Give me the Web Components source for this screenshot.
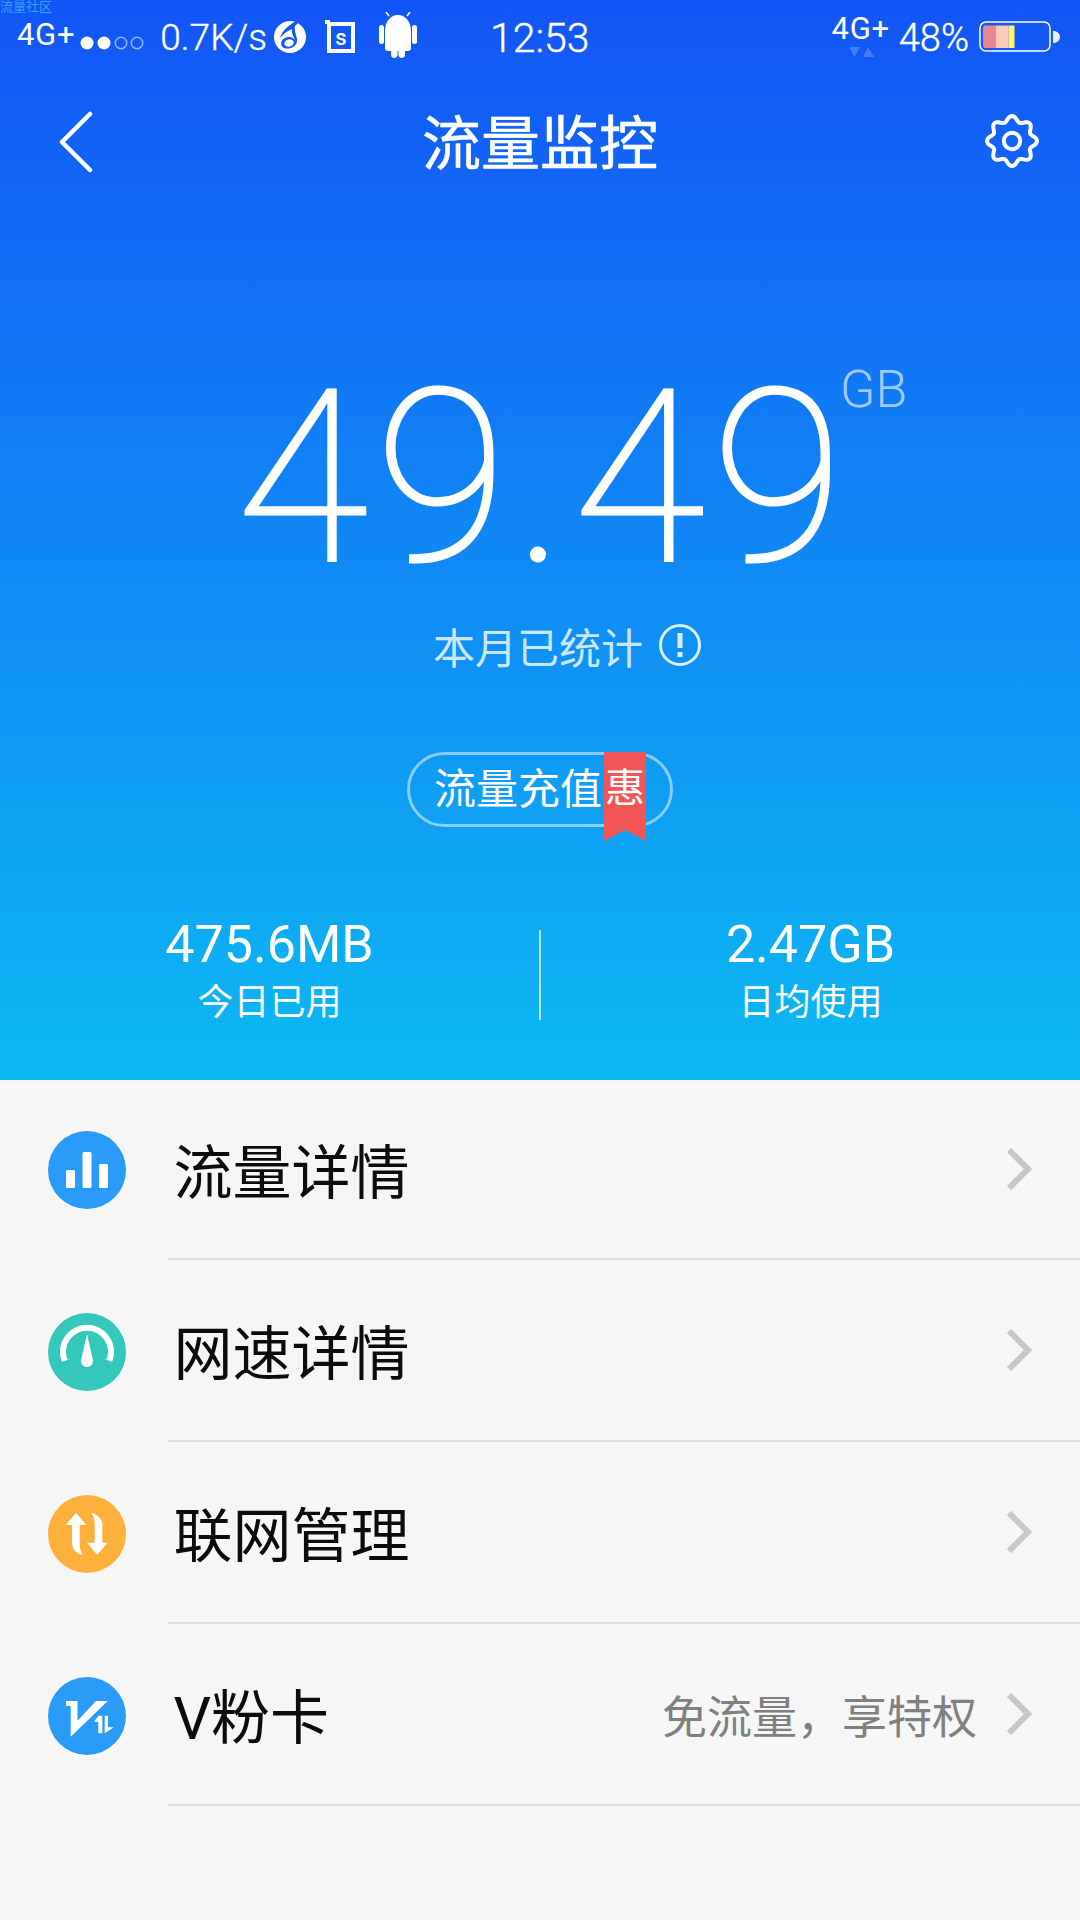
<!DOCTYPE html>
<html>
<head>
<meta charset="utf-8">
<title>流量监控</title>
<style>
  html, body { margin: 0; padding: 0; }
  body {
    width: 1080px;
    height: 1920px;
    overflow: hidden;
    background: #f6f6f6;
    font-family: Roboto, "Noto Sans CJK SC", sans-serif;
  }
  traffic-hero, menu-list { display: block; }
</style>
</head>
<body>
<traffic-hero>
  <status-bar></status-bar>
  <nav-bar title="流量监控"></nav-bar>
  <usage-total value="49.49" unit="GB" note="本月已统计"></usage-total>
  <recharge-pill label="流量充值" tag="惠"></recharge-pill>
  <usage-stats>
    <stat-item value="475.6MB" label="今日已用"></stat-item>
    <stat-item value="2.47GB" label="日均使用"></stat-item>
  </usage-stats>
</traffic-hero>
<menu-list>
  <menu-row title="流量详情" first>
    <svg slot="icon" width="78" height="78" viewBox="0 0 78 78">
      <circle cx="39" cy="39" r="39" fill="#2b9bfa"/>
      <rect x="18" y="39" width="9" height="18" rx="1.5" fill="#fff"/>
      <rect x="34.500" y="21" width="9" height="36" rx="1.5" fill="#fff"/>
      <rect x="51" y="33" width="9" height="24" rx="1.5" fill="#fff"/>
    </svg>
  </menu-row>
  <menu-row title="网速详情">
    <svg slot="icon" width="78" height="78" viewBox="0 0 78 78">
      <circle cx="39" cy="39" r="39" fill="#34c7bb"/>
      <path d="M14 49A27 27 0 1 1 64 49L55 45.500L58.500 46.500A21 21 0 1 0 19.500 46.500L23 45.500Z" fill="#fff"/>
      <path d="M39 21L44.800 46.500A6 6 0 1 1 33.200 46.500Z" fill="#fff"/>
    </svg>
  </menu-row>
  <menu-row title="联网管理">
    <svg slot="icon" width="78" height="78" viewBox="0 0 78 78">
      <circle cx="39" cy="39" r="39" fill="#ffb13c"/>
      <path d="M28 17.700L38.300 30H31.700V48C31.700 53 32.500 57 35 60C28 58 24 54 24 48V30H17.700Z" fill="#fff"/>
      <path d="M49.300 60L39 47.700H46.700V30C46.700 25 45.500 21 43 17.700C50 19.500 54.300 24 54.300 30V47.700H59.300Z" fill="#fff"/>
    </svg>
  </menu-row>
  <menu-row title="V粉卡" sub="免流量，享特权">
    <svg slot="icon" width="78" height="78" viewBox="0 0 78 78">
      <circle cx="39" cy="39" r="39" fill="#2b9bfa"/>
      <path d="M18 24H29.500V43.700L48 24H59.700L22.700 59.700V29H18Z" fill="#fff"/>
      <path d="M46 45L50.300 38.700H54.300V56.300H50.300V45Z" fill="#fff"/>
      <path d="M56.700 38.700H60V50.300H65.700L56.700 56.300Z" fill="#fff"/>
    </svg>
  </menu-row>
</menu-list>

<script>
const CJK_FONT = 'Roboto, "Noto Sans CJK SC", sans-serif';

class TrafficHero extends HTMLElement {
  constructor() {
    super();
    this.attachShadow({mode: 'open'});
    this.shadowRoot.innerHTML = `
    <style>
      :host {
        display: flex;
        flex-direction: column;
        position: relative;
        height: 1080px;
        background: linear-gradient(180deg, #1355f6 0%, #0db9f3 100%);
        color: #fff;
        font-family: ${CJK_FONT};
      }
      .mark {
        position: absolute;
        left: 0;
        top: 0;
        font-size: 13px;
        line-height: 14px;
        color: rgba(60, 175, 255, .85);
      }
    </style>
    <div class="mark">流量社区</div>
    <slot></slot>
    `;
  }
}

class StatusBar extends HTMLElement {
  constructor() {
    super();
    this.attachShadow({mode: 'open'});
    this.shadowRoot.innerHTML = `
    <style>
      :host {
        display: flex;
        align-items: flex-start;
        height: 75px;
        font-weight: 300;
        -webkit-text-stroke: .4px #fff;
      }
      span { display: block; white-space: nowrap; }
      svg { display: block; flex: none; }
      .net {
        font-size: 31px;
        line-height: 30px;
        font-weight: 400;
        letter-spacing: .7px;
        -webkit-text-stroke: 0;
        margin: 20px 0 0 17px;
      }
      .dots { margin: 36px 0 0 5px; }
      .speed { font-size: 37px; line-height: 40px; margin: 18px 0 0 16px; }
      .music { margin: 21px 0 0 7px; }
      .sim { margin: 19px 0 0 19px; }
      .droid { margin: 12px 0 0 24px; }
      .time { font-size: 41px; line-height: 44px; margin: 16px 0 0 73px; }
      .net2 { position: relative; margin: 14px 0 0 242px; }
      .net2 .net { margin: 0; }
      .arrows { position: absolute; left: 17px; top: 33px; }
      .pct { font-size: 38px; line-height: 40px; margin: 18px 0 0 9px; }
      .batt { margin: 21px 0 0 10px; }
    </style>
    <span class="net">4G+</span>
    <svg class="dots" width="64" height="14" viewBox="0 0 64 14">
      <circle cx="7" cy="7" r="6.500" fill="#fff"/>
      <circle cx="24" cy="7" r="6.500" fill="#fff"/>
      <circle cx="41" cy="7" r="5.700" fill="none" stroke="#fff" stroke-opacity=".55" stroke-width="1.500"/>
      <circle cx="57" cy="7" r="5.700" fill="none" stroke="#fff" stroke-opacity=".55" stroke-width="1.500"/>
    </svg>
    <span class="speed">0.7K/s</span>
    <svg class="music" width="32" height="32" viewBox="0 0 32 32">
      <circle cx="16" cy="16" r="16" fill="#fff"/>
      <path d="M19.500 1.500C15 5 8 9 6 17C9 13 13 10 18 8C17 12 20 16 21.500 20C20 16.500 15 15 11 17C6 19 6 25 10 27C15 29 24 26 23 18C22 13 20 9 21 5L24 2L21 0Z" fill="#1457f6"/>
      <ellipse cx="15" cy="22" rx="4.800" ry="3.600" transform="rotate(-15 15 22)" fill="#fff"/>
    </svg>
    <svg class="sim" width="30" height="34" viewBox="0 0 30 34">
      <path d="M4 5H28V32H4Z" fill="none" stroke="#fff" stroke-width="4"/>
      <rect x="0" y="1" width="5" height="4" fill="#fff"/>
      <text x="16" y="26" text-anchor="middle" font-family="Roboto, sans-serif" font-size="22" font-weight="500" fill="#fff" stroke="none">s</text>
    </svg>
    <svg class="droid" width="38" height="46" viewBox="0 0 38 46">
      <path d="M10 4L7 0M28 4L31 0" stroke="#fff" stroke-width="1.500"/>
      <path d="M6 19C6 9 12 3 19 3S32 9 32 19V36C32 38 31 39 29 39H26V43C26 47 19.500 47 19.500 43V39H18.500V43C18.500 47 12 47 12 43V39H9C7 39 6 38 6 36Z" fill="#fff"/>
      <rect x="0" y="13" width="5" height="19" rx="2.500" fill="#fff"/>
      <rect x="33" y="13" width="5" height="19" rx="2.500" fill="#fff"/>
    </svg>
    <span class="time">12:53</span>
    <div class="net2">
      <span class="net">4G+</span>
      <svg class="arrows" width="25" height="11" viewBox="0 0 25 11">
        <path d="M0 0H11L5.500 10ZM14 10L19 0L25 10Z" fill="#fff" fill-opacity=".22"/>
      </svg>
    </div>
    <span class="pct">48%</span>
    <svg class="batt" width="82" height="32" viewBox="0 0 82 32">
      <rect x="1" y="1" width="70" height="29" rx="6" fill="none" stroke="#fff" stroke-width="1.500"/>
      <path d="M4 7C4 5.500 5 4.500 6.500 4.500H16.500V27H6.500C5 27 4 26 4 24.500Z" fill="#ea8594"/>
      <rect x="16.500" y="4.500" width="13" height="22.500" fill="#fbcdb9"/>
      <rect x="29.500" y="4.500" width="6" height="22.500" fill="#fdf56d"/>
      <path d="M74 10H76C79 11 81 13 81 16S79 21 76 22H74Z" fill="#fff" fill-opacity=".9"/>
    </svg>
    `;
  }
}

class NavBar extends HTMLElement {
  constructor() {
    super();
    this.attachShadow({mode: 'open'});
    let d = '';
    for (let i = 0; i < 160; i++) {
      const a = i / 160 * Math.PI * 2;
      const r = 22.3 + 2.7 * Math.cos(a * 8);
      d += (i ? 'L' : 'M') + (27 + r * Math.sin(a)).toFixed(2) + ' ' + (27 - r * Math.cos(a)).toFixed(2);
    }
    this.shadowRoot.innerHTML = `
    <style>
      :host {
        display: grid;
        grid-template-columns: 1fr auto 1fr;
        align-items: center;
        height: 135px;
      }
      h1 {
        margin: 0;
        padding-top: 4px;
        font-size: 59px;
        line-height: 70px;
        font-weight: 400;
        -webkit-text-stroke: .6px #fff;
      }
      .back { margin: 0 0 2px 59px; }
      .gear { justify-self: end; margin: 0 41px 3px 0; }
      svg { display: block; }
    </style>
    <svg class="back" width="34" height="62" viewBox="0 0 34 62">
      <path d="M31 3L3 31L31 59" fill="none" stroke="#fff" stroke-width="4.500" stroke-linecap="round" stroke-linejoin="round"/>
    </svg>
    <h1>${this.getAttribute('title')}</h1>
    <svg class="gear" width="54" height="54" viewBox="0 0 54 54">
      <path d="${d}Z" fill="none" stroke="#fff" stroke-width="4"/>
      <circle cx="27" cy="27" r="8.200" fill="none" stroke="#fff" stroke-width="4"/>
    </svg>
    `;
  }
}

class UsageTotal extends HTMLElement {
  constructor() {
    super();
    this.attachShadow({mode: 'open'});
    this.shadowRoot.innerHTML = `
    <style>
      :host { display: block; margin-top: 150px; }
      .num-row { display: flex; justify-content: center; }
      .num {
        position: relative;
        font-size: 240px;
        line-height: 236px;
        font-weight: 100;
        letter-spacing: 7.500px;
        margin-right: -7.500px;
        -webkit-text-stroke: 3px #fff;
      }
      .unit {
        position: absolute;
        left: 100%;
        top: 2px;
        margin-left: -11px;
        font-size: 52px;
        line-height: 56px;
        font-weight: 300;
        letter-spacing: 0;
        -webkit-text-stroke: 0;
        color: rgba(255, 255, 255, .6);
      }
      .note-row {
        display: flex;
        justify-content: center;
        align-items: center;
        gap: 16px;
        height: 50px;
        margin-top: 24px;
        padding: 0 0 0 54px;
        font-size: 42px;
        font-weight: 400;
        color: rgba(255, 255, 255, .8);
      }
      .note-row svg { display: block; }
    </style>
    <div class="num-row">
      <div class="num">${this.getAttribute('value')}<span class="unit">${this.getAttribute('unit')}</span></div>
    </div>
    <div class="note-row">
      <span>${this.getAttribute('note')}</span>
      <svg width="42" height="42" viewBox="0 0 42 42">
        <circle cx="21" cy="21" r="19.500" fill="none" stroke="#fff" stroke-opacity=".85" stroke-width="3"/>
        <rect x="18.500" y="9" width="5" height="15" fill="#fff" fill-opacity=".85"/>
        <rect x="18.500" y="28" width="5" height="5" fill="#fff" fill-opacity=".85"/>
      </svg>
    </div>
    `;
  }
}

class RechargePill extends HTMLElement {
  constructor() {
    super();
    this.attachShadow({mode: 'open'});
    this.shadowRoot.innerHTML = `
    <style>
      :host {
        display: block;
        position: relative;
        box-sizing: border-box;
        width: 266px;
        height: 75px;
        margin: 82px auto 0;
        padding-left: 24px;
        border: 3px solid rgba(255, 255, 255, .5);
        border-radius: 38px;
        font-size: 42px;
        line-height: 70px;
        font-weight: 400;
        white-space: nowrap;
      }
      .tag {
        position: absolute;
        left: 194px;
        top: -3px;
        width: 42px;
        height: 89px;
      }
      .tag svg { position: absolute; left: 0; top: 0; }
      .tag span {
        position: absolute;
        left: 0;
        right: 0;
        top: 1px;
        text-align: center;
        font-size: 40px;
        line-height: 72px;
      }
    </style>
    ${this.getAttribute('label')}
    <div class="tag">
      <svg width="42" height="89" viewBox="0 0 42 89"><path d="M0 0H42V89L21 78L0 89Z" fill="#f25555"/></svg>
      <span>${this.getAttribute('tag')}</span>
    </div>
    `;
  }
}

class UsageStats extends HTMLElement {
  constructor() {
    super();
    this.attachShadow({mode: 'open'});
    this.shadowRoot.innerHTML = `
    <style>
      :host {
        display: grid;
        grid-template-columns: 1fr 2px 1fr;
        margin-top: 88px;
      }
      .line {
        grid-column: 2;
        grid-row: 1;
        height: 90px;
        margin-top: 15px;
        background: rgba(255, 255, 255, .7);
      }
      ::slotted(:first-child) { grid-column: 1; grid-row: 1; }
      ::slotted(:last-child) { grid-column: 3; grid-row: 1; }
    </style>
    <div class="line"></div>
    <slot></slot>
    `;
  }
}

class StatItem extends HTMLElement {
  constructor() {
    super();
    this.attachShadow({mode: 'open'});
    this.shadowRoot.innerHTML = `
    <style>
      :host { display: block; text-align: center; }
      .value { font-size: 52px; line-height: 60px; font-weight: 400; }
      .label { font-size: 36px; line-height: 50px; margin-top: 3px; font-weight: 400; }
    </style>
    <div class="value">${this.getAttribute('value')}</div>
    <div class="label">${this.getAttribute('label')}</div>
    `;
  }
}

class MenuRow extends HTMLElement {
  constructor() {
    super();
    this.attachShadow({mode: 'open'});
    const sub = this.getAttribute('sub');
    this.shadowRoot.innerHTML = `
    <style>
      :host {
        display: flex;
        align-items: center;
        height: 182px;
        padding-left: 48px;
        font-family: ${CJK_FONT};
      }
      :host([first]) { height: 180px; }
      ::slotted(svg) { display: block; flex: none; margin-top: 2px; }
      :host([first]) ::slotted(svg) { margin-top: 0; }
      .body {
        display: flex;
        align-items: center;
        flex: 1;
        box-sizing: border-box;
        height: 100%;
        margin-left: 42px;
        padding: 0 48px 0 5.500px;
        border-bottom: 2px solid #dedede;
      }
      .title { flex: 1; font-size: 59px; line-height: 70px; padding-top: 10px; color: #0c0c0c; }
      .sub { font-size: 45px; line-height: 60px; padding-top: 10px; color: #808080; margin-right: 29px; }
      svg { display: block; }
    </style>
    <slot name="icon"></slot>
    <div class="body">
      <div class="title">${this.getAttribute('title')}</div>
      ${sub ? `<div class="sub">${sub}</div>` : ''}
      <svg width="26" height="42" viewBox="0 0 26 42">
        <path d="M3 2L22 21L3 40" fill="none" stroke="#c8c8c8" stroke-width="6"/>
      </svg>
    </div>
    `;
  }
}

customElements.define('traffic-hero', TrafficHero);
customElements.define('status-bar', StatusBar);
customElements.define('nav-bar', NavBar);
customElements.define('usage-total', UsageTotal);
customElements.define('recharge-pill', RechargePill);
customElements.define('usage-stats', UsageStats);
customElements.define('stat-item', StatItem);
customElements.define('menu-row', MenuRow);
</script>
</body>
</html>
